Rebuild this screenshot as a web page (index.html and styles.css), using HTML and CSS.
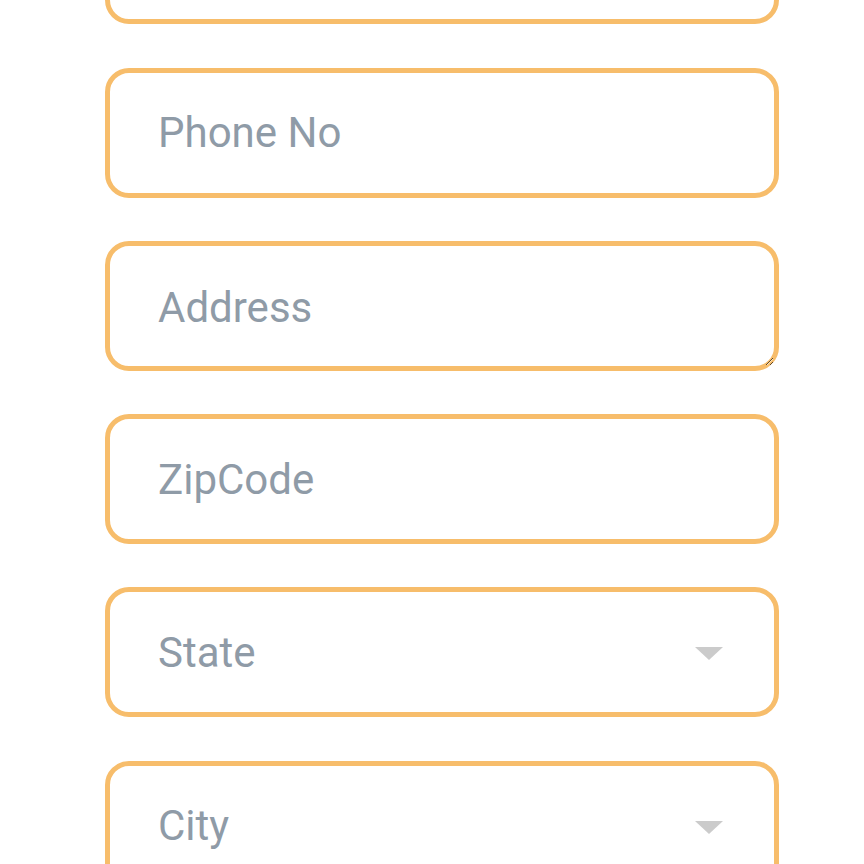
FILE: index.html
```html
<!DOCTYPE html>
<html>
<head>
<meta charset="utf-8">
<link rel="stylesheet" href="styles.css">
</head>
<body>
<form class="form">
  <div class="field"><input class="input" placeholder="Email"></div>
  <div class="field"><input class="input" placeholder="Phone No"></div>
  <div class="field"><textarea class="input area" placeholder="Address"></textarea></div>
  <div class="field"><input class="input" placeholder="ZipCode"></div>
  <div class="field select"><span class="input">State</span><span class="arrow"></span></div>
  <div class="field select"><span class="input">City</span><span class="arrow"></span></div>
</form>
</body>
</html>
```
FILE: styles.css
```css
html, body { margin: 0; padding: 0; background: #fff; overflow: hidden; }
.form {
  display: flex;
  flex-direction: column;
  gap: 43.3px;
  padding-left: 105px;
  width: 674px;
  margin-top: -105.8px;
}
.field {
  position: relative;
  box-sizing: border-box;
  height: 130px;
  border: 5px solid #f7bd6b;
  border-radius: 24px;
  display: flex;
  align-items: center;
  background: #fff;
}
.input {
  flex: 1;
  border: 0;
  outline: none;
  background: transparent;
  padding: 0 0 0 48px;
  font-family: Roboto, "Noto Sans", sans-serif;
  font-size: 42px;
  color: #8f9ba7;
  height: 100%;
  box-sizing: border-box;
}
.input::placeholder { color: #8f9ba7; }
.area {
  resize: vertical;
  padding-top: 38px;
  line-height: 48px;
}
span.input { display: flex; align-items: center; }
.arrow {
  width: 0; height: 0;
  border-left: 14px solid transparent;
  border-right: 14px solid transparent;
  border-top: 13px solid #cbcbcb;
  margin-right: 51px;
  margin-top: 3px;
}
```
